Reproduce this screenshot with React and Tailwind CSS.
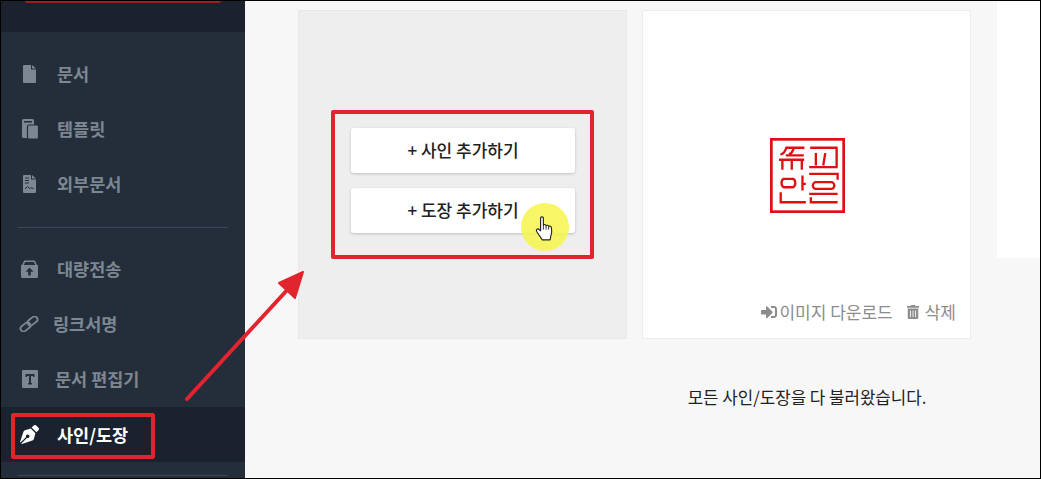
import React from 'react';
import { FaPenNib, FaSignInAlt, FaTrashAlt } from 'react-icons/fa';

const font = { fontFamily: '"Noto Sans CJK KR", "Noto Sans", sans-serif' };

const FileIcon = () => (
  <svg width="13" height="18" viewBox="0 0 13 18" fill="currentColor">
    <path d="M1 0h7v4.500h5V17a1 1 0 0 1-1 1H1a1 1 0 0 1-1-1V1a1 1 0 0 1 1-1zM9 0l4 3.500H9z" />
  </svg>
);

const TemplateIcon = () => (
  <svg width="17" height="20" viewBox="0 0 17 20" fill="currentColor">
    <rect x="0" y="0" width="12" height="19" rx="1.500" />
    <rect x="2" y="2" width="8" height="1.500" fill="#242e3b" />
    <rect x="5.500" y="6" width="11" height="14" rx="1.500" stroke="#242e3b" strokeWidth="1.200" />
  </svg>
);

const PdfIcon = () => (
  <svg width="13" height="18" viewBox="0 0 13 18" fill="currentColor">
    <path d="M1 0h7v4.500h5V17a1 1 0 0 1-1 1H1a1 1 0 0 1-1-1V1a1 1 0 0 1 1-1zM9 0l4 3.500H9z" />
    <path d="M2 3h4M2 5.500h4M2 8h4M2 14l2.500-2.500 2 2 1-.8 3 .8" stroke="#242e3b" strokeWidth="1" fill="none" />
  </svg>
);

const ArchiveUp = () => (
  <svg width="17" height="18" viewBox="0 0 17 18" fill="currentColor">
    <path d="M3.200 0.500h10.600L16 5H14.300L12.800 2H4.200L2.700 5H1z" />
    <path fillRule="evenodd" d="M0 5h17v11.500a1.500 1.500 0 0 1-1.500 1.500h-14A1.500 1.500 0 0 1 0 16.500zM8.500 7.500l-4 4.200h2.700v3.800h2.600v-3.800h2.700z" />
  </svg>
);

const LinkIcon = () => (
  <svg width="20" height="16" viewBox="0 0 20 16" fill="none" stroke="currentColor" strokeWidth="1.800">
    <rect x="1" y="8" width="11" height="6" rx="3" transform="rotate(-38 6.500 11)" />
    <rect x="8" y="2" width="11" height="6" rx="3" transform="rotate(-38 13.500 5)" />
  </svg>
);

const TextBox = () => (
  <svg width="16" height="18" viewBox="0 0 16 18" fill="currentColor">
    <path fillRule="evenodd" d="M1 0h14a1 1 0 0 1 1 1v16a1 1 0 0 1-1 1H1a1 1 0 0 1-1-1V1a1 1 0 0 1 1-1zM3.500 4v3h1.500V6h2v7H6v1.500h4V13H9V6h2v1h1.500V4z" />
  </svg>
);

// seal drawn in the zoomed crop's own coordinates
const Stamp = () => (
  <svg width="75" height="75" viewBox="13 13 224 224" fill="none" stroke="#e01010" strokeWidth="7">
    <rect x="17" y="17" width="216" height="216" strokeWidth="8" />
    <path d="M133 42h82M150 58v37M178 58l-6 37M212 42v58M130 100h85" />
    <path d="M44 62c10 0 14-8 18-20h54M84 42c-2 10-6 16-14 20M60 65h54M40 78h75M50 78v30M78 78v30M108 78v30" />
    <path d="M54 135h28a9 13 0 0 1 0 25H54a9 13 0 0 1 0-25zM110 125v45M110 150h10M45 175v30h75" />
    <path d="M130 120h85v18M150 145h46a9 10 0 0 1 0 20h-46a9 10 0 0 1 0-20zM130 180h85M135 190v15h80" />
  </svg>
);

const Hand = () => (
  <svg width="19" height="25" viewBox="0 0 17 22">
    <path
      d="M5 1.700c0-1.500 2.500-1.500 2.500 0V8c.8-.9 2.100-.6 2.400.4.800-.7 2.100-.3 2.300.7.900-.5 2.300 0 2.500 1.200.5 2.500.3 5-.5 7.200l-.7 3.700H6.500l-5-7.500c-1-1.700 1-3 2.200-1.800L5 13z"
      fill="#fff"
      stroke="#222"
      strokeWidth="1"
      strokeLinejoin="round"
    />
    <path d="M7.500 8v4M9.900 8.500V12M12.200 9.300V12" stroke="#222" strokeWidth="0.800" />
  </svg>
);

const menuTop = [
  { label: '문서', icon: <FileIcon />, pad: 'pl-[22px]', gap: 'gap-[21px]' },
  { label: '템플릿', icon: <TemplateIcon />, pad: 'pl-[21px]', gap: 'gap-[18px]' },
  { label: '외부문서', icon: <PdfIcon />, pad: 'pl-[22px]', gap: 'gap-[21px]' },
];

const menuBottom = [
  { label: '대량전송', icon: <ArchiveUp />, pad: 'pl-[20px]', gap: 'gap-[19px]' },
  { label: '링크서명', icon: <LinkIcon />, pad: 'pl-[18px]', gap: 'gap-[14px]' },
  { label: '문서 편집기', icon: <TextBox />, pad: 'pl-[21px]', gap: 'gap-[17px]' },
];

const MenuItem = ({ item }) => (
  <div className={`flex h-[55px] items-center ${item.pad} ${item.gap} text-[#7d8792]`}>
    {item.icon}
    <span className="text-[17.5px] font-bold leading-none">{item.label}</span>
  </div>
);

const buttonClass =
  'ml-px h-[45px] w-[224px] rounded-[3px] bg-white text-[17px] font-medium text-[#222] shadow-[0_1px_3px_rgba(0,0,0,0.2)]';

const App = () => {
  return (
    <div
      className="relative flex h-[479px] w-[1041px] overflow-hidden border-t border-r border-b border-l border-black bg-[#f7f7f7]"
      style={font}
    >
      {/* Sidebar */}
      <aside className="flex w-[244px] shrink-0 flex-col bg-[#242e3b]">
        <div className="h-[31px] bg-[#1b222d]">
          <div className="mx-[24px] h-[2px] rounded-b bg-[#a01c24]" />
        </div>
        <nav className="flex flex-col pt-[14px]">
          {menuTop.map((item) => (
            <MenuItem key={item.label} item={item} />
          ))}
        </nav>
        <div className="mx-[17px] mt-[16px] h-px bg-[#3d4856]" />
        <nav className="flex flex-col pt-[13px]">
          {menuBottom.map((item) => (
            <MenuItem key={item.label} item={item} />
          ))}
        </nav>
        <div className="mt-px flex h-[55px] items-center gap-[18px] bg-[#1b222d] pl-[19px] text-white">
          <FaPenNib size={19} />
          <span className="text-[17.5px] font-bold leading-none">사인/도장</span>
        </div>
        <div className="mx-[17px] mt-[13px] h-px bg-[#3d4856]" />
      </aside>

      {/* Content */}
      <main className="flex flex-1 flex-col bg-[#f7f7f7]">
        <div className="flex items-start">
          <div className="ml-[53px] mt-[9px] flex h-[329px] w-[329px] flex-col items-center justify-center gap-[15px] border border-[#e8e8e8] bg-[#eeeeee] pt-[11px]">
            <button className={buttonClass}>+ 사인 추가하기</button>
            <button className={buttonClass}>+ 도장 추가하기</button>
          </div>

          <div className="ml-[15px] mt-[9px] flex h-[329px] w-[329px] flex-col border border-[#ececec] bg-white">
            <div className="flex flex-1 items-center justify-center pl-px pt-[39px]">
              <Stamp />
            </div>
            <div className="flex h-[38px] items-start justify-end gap-[13px] pr-[14px] text-[17px] leading-[24px] text-[#8c8c8c]">
              <span className="flex items-center gap-[2px]">
                <FaSignInAlt size={16} />
                이미지 다운로드
              </span>
              <span className="flex items-center gap-[5px]">
                <FaTrashAlt size={14} />
                삭제
              </span>
            </div>
          </div>

          <div className="ml-[26px] h-[257px] flex-1 bg-white" />
        </div>

        <p className="ml-[312px] mt-[46px] w-[500px] text-center text-[16.800px] text-[#222]">모든 사인/도장을 다 불러왔습니다.</p>
      </main>

      {/* Annotations over the screenshot */}
      <div className="absolute left-[330px] top-[109px] h-[149px] w-[263px] rounded-[2px] border-[4px] border-[#e1242e]" />
      <div className="absolute left-[10px] top-[412px] h-[46px] w-[144px] rounded-[2px] border-[4px] border-[#e1242e]" />
      <svg className="absolute left-[180px] top-[265px]" width="130" height="140" viewBox="0 0 130 140" fill="none">
        <path d="M6 133L108 22" stroke="#e1242e" strokeWidth="4" strokeLinecap="round" />
        <path d="M122 6L98 17L114 32z" fill="#e1242e" stroke="#e1242e" strokeWidth="2" strokeLinejoin="round" />
      </svg>
      <div className="absolute left-[520px] top-[202px] flex h-[48px] w-[48px] items-center justify-center rounded-full bg-[#f6f64a]/85">
        <span className="mt-[2px] -ml-[1px]">
          <Hand />
        </span>
      </div>
    </div>
  );
};

export default App;
